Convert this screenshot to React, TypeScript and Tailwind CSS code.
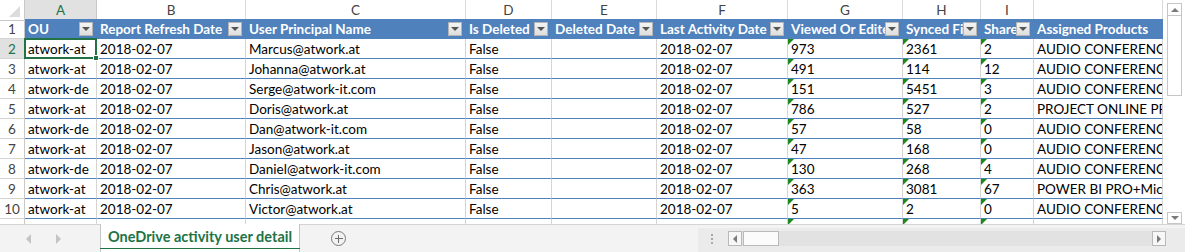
import React from "react";

const rows: string[][] = [
  ["atwork-at", "2018-02-07", "Marcus@atwork.at", "False", "", "2018-02-07", "973", "2361", "2", "AUDIO CONFERENCING+OFFICE 365 E5"],
  ["atwork-at", "2018-02-07", "Johanna@atwork.at", "False", "", "2018-02-07", "491", "114", "12", "AUDIO CONFERENCING+OFFICE 365 E5"],
  ["atwork-de", "2018-02-07", "Serge@atwork-it.com", "False", "", "2018-02-07", "151", "5451", "3", "AUDIO CONFERENCING+OFFICE 365 E5"],
  ["atwork-at", "2018-02-07", "Doris@atwork.at", "False", "", "2018-02-07", "786", "527", "2", "PROJECT ONLINE PREMIUM+OFFICE 365 E5"],
  ["atwork-de", "2018-02-07", "Dan@atwork-it.com", "False", "", "2018-02-07", "57", "58", "0", "AUDIO CONFERENCING+OFFICE 365 E5"],
  ["atwork-at", "2018-02-07", "Jason@atwork.at", "False", "", "2018-02-07", "47", "168", "0", "AUDIO CONFERENCING+OFFICE 365 E5"],
  ["atwork-de", "2018-02-07", "Daniel@atwork-it.com", "False", "", "2018-02-07", "130", "268", "4", "AUDIO CONFERENCING+OFFICE 365 E5"],
  ["atwork-at", "2018-02-07", "Chris@atwork.at", "False", "", "2018-02-07", "363", "3081", "67", "POWER BI PRO+Microsoft Flow Free"],
  ["atwork-at", "2018-02-07", "Victor@atwork.at", "False", "", "2018-02-07", "5", "2", "0", "AUDIO CONFERENCING+OFFICE 365 E5"],
];

const headers = [
  "OU",
  "Report Refresh Date",
  "User Principal Name",
  "Is Deleted",
  "Deleted Date",
  "Last Activity Date",
  "Viewed Or Edited File Count",
  "Synced File Count",
  "Shared Internally File Count",
  "Assigned Products",
];

const letters = ["A", "B", "C", "D", "E", "F", "G", "H", "I", ""];

const GRID =
  "grid grid-cols-[25px_72px_149px_220px_86px_105px_131px_115px_78px_53px_129px]";

function Tri() {
  return (
    <span className="absolute left-0 top-0 w-0 h-0 border-t-[6px] border-t-[#1a8a1a] border-r-[6px] border-r-transparent" />
  );
}

function FilterBtn() {
  return (
    <span className="shrink-0 w-[14px] h-[14px] mr-[4px] mb-[2px] border border-[#b4b4b4] bg-gradient-to-b from-[#f4f4f4] to-[#dedede] flex items-center justify-center">
      <span className="w-0 h-0 border-l-[4px] border-r-[4px] border-t-[4px] border-l-transparent border-r-transparent border-t-[#555555]" />
    </span>
  );
}

function ColumnLetters() {
  return (
    <div className={`${GRID} h-[19px] shrink-0 bg-white`}>
      <div className="relative border-r border-b border-[#c8c8c8] bg-white">
        <span className="absolute right-[4px] bottom-[3px] w-0 h-0 border-b-[11px] border-b-[#dcdcdc] border-l-[11px] border-l-transparent" />
      </div>
      {letters.map((l, i) => (
        <div
          key={i}
          className={
            i === 0
              ? "border-r border-r-[#c8c8c8] border-b-2 border-b-[#217346] bg-[#e1e1e1] text-[#217346] text-center text-[13.5px] pt-[1px] leading-[18px]"
              : "border-r border-r-[#dadada] border-b border-b-[#c8c8c8] text-[#444444] text-center text-[13.5px] pt-[1px] leading-[18px]"
          }
        >
          {l}
        </div>
      ))}
    </div>
  );
}

function HeaderRow() {
  return (
    <div className={`${GRID} h-[20px] shrink-0`}>
      <div className="border-r border-r-[#c8c8c8] border-b border-b-[#d4d4d4] bg-white text-[#444444] text-center text-[13.5px] pt-[2px] leading-[17px]">
        1
      </div>
      {headers.map((h) => (
        <div
          key={h}
          className="bg-[#4f81bd] border-b border-b-[#4f81bd] flex items-end min-w-0 overflow-hidden"
        >
          <span className="flex-1 min-w-0 overflow-hidden whitespace-nowrap pl-[3px] pt-[2px] leading-[17px] h-full text-white font-bold text-[13.5px]">
            {h}
          </span>
          {h !== "Assigned Products" && <FilterBtn />}
        </div>
      ))}
    </div>
  );
}

function DataRow({ n, r, selected }: { n: number; r: string[]; selected?: boolean }) {
  return (
    <div className={`${GRID} h-[20px] shrink-0`}>
      <div
        className={
          selected
            ? "border-r border-r-[#c8c8c8] border-b border-b-[#d4d4d4] bg-[#e1e1e1] text-[#217346] text-center text-[13.5px] pt-[2px] leading-[17px]"
            : "border-r border-r-[#c8c8c8] border-b border-b-[#d4d4d4] bg-white text-[#444444] text-center text-[13.5px] pt-[2px] leading-[17px]"
        }
      >
        {n}
      </div>
      {r.map((v, i) => (
        <div
          key={i}
          className={
            selected && i === 0
              ? "relative z-10 min-w-0 border-r border-r-[#d4d4d4] border-b border-b-[#4f81bd] bg-white"
              : "relative min-w-0 border-r border-r-[#d4d4d4] border-b border-b-[#4f81bd] bg-white"
          }
        >
          {i >= 6 && i <= 8 && <Tri />}
          <div className="overflow-hidden whitespace-nowrap pl-[3px] pt-[2px] leading-[17px] text-[13.5px] text-black">
            {v}
          </div>
          {selected && i === 0 && (
            <div className="absolute -left-[1px] -top-[1px] -right-[1px] -bottom-[1px] border-2 border-[#217346]">
              <span className="absolute -right-[4px] -bottom-[4px] w-[6px] h-[6px] bg-[#217346] border border-white" />
            </div>
          )}
        </div>
      ))}
    </div>
  );
}

function PartialRow() {
  return (
    <div className={`${GRID} h-[20px] shrink-0`}>
      <div className="border-r border-r-[#c8c8c8] bg-white" />
      {letters.map((l, i) => (
        <div key={i} className="relative border-r border-r-[#d4d4d4] bg-white">
          {i >= 6 && i <= 8 && <Tri />}
        </div>
      ))}
    </div>
  );
}

function VScroll() {
  return (
    <div className="w-[22px] h-[224px] bg-white flex flex-col pl-[4px] pt-[3px]">
      <div className="w-[15px] h-[13px] border border-[#c6c6c6] bg-white flex items-center justify-center">
        <span className="w-0 h-0 border-l-[4px] border-r-[4px] border-b-[4px] border-l-transparent border-r-transparent border-b-[#7a7a7a]" />
      </div>
      <div className="w-[15px] h-[80px] border border-t-0 border-[#c6c6c6] bg-white" />
      <div className="flex-1" />
      <div className="w-[15px] h-[12px] border border-[#c6c6c6] bg-white flex items-center justify-center mb-0">
        <span className="w-0 h-0 border-l-[4px] border-r-[4px] border-t-[4px] border-l-transparent border-r-transparent border-t-[#7a7a7a]" />
      </div>
    </div>
  );
}

function BottomBar() {
  return (
    <div className="h-[28px] flex bg-[#f3f3f3] border-t border-t-[#d4d4d4]">
      <div className="w-[100px] flex items-center">
        <span className="ml-[26px] w-0 h-0 border-t-[5px] border-b-[5px] border-r-[5px] border-t-transparent border-b-transparent border-r-[#c4c4c4]" />
        <span className="ml-[25px] w-0 h-0 border-t-[5px] border-b-[5px] border-l-[5px] border-t-transparent border-b-transparent border-l-[#c4c4c4]" />
      </div>
      <div className="w-[200px] -mt-[1px] bg-white border-l border-r border-[#c6c6c6] flex flex-col">
        <div className="flex-1 flex items-center justify-center text-[#217346] font-bold text-[14.5px] pt-[2px]">
          OneDrive activity user detail
        </div>
        <div className="h-[3px] mx-[-1px] bg-[#217346] mb-[3px]" />
      </div>
      <div className="w-[398px] flex items-center">
        <span className="ml-[31px] w-[15px] h-[15px] rounded-full border-[1.5px] border-[#7a7a7a] flex items-center justify-center relative">
          <span className="absolute w-[8px] h-[1.5px] bg-[#6a6a6a]" />
          <span className="absolute w-[1.5px] h-[8px] bg-[#6a6a6a]" />
        </span>
      </div>
      <div className="flex-1 mt-[3px] bg-[#ebebeb] flex items-center">
        <div className="ml-[13px] flex flex-col gap-[2px] mb-[3px]">
          <span className="w-[2px] h-[2px] bg-[#a8a8a8]" />
          <span className="w-[2px] h-[2px] bg-[#a8a8a8]" />
          <span className="w-[2px] h-[2px] bg-[#a8a8a8]" />
        </div>
        <div className="ml-[15px] w-[438px] h-[15px] mb-[3px] bg-[#e2e2e2] flex items-center">
          <div className="w-[14px] h-[15px] border border-[#b9b9b9] bg-[#f7f7f7] flex items-center justify-center">
            <span className="w-0 h-0 border-t-[4px] border-b-[4px] border-r-[4px] border-t-transparent border-b-transparent border-r-[#7a7a7a]" />
          </div>
          <div className="ml-[1px] w-[36px] h-[15px] border border-[#b9b9b9] bg-[#fbfbfb]" />
          <div className="flex-1" />
          <div className="w-[14px] h-[15px] border border-[#b9b9b9] bg-[#f7f7f7] flex items-center justify-center">
            <span className="w-0 h-0 border-t-[4px] border-b-[4px] border-l-[4px] border-t-transparent border-b-transparent border-l-[#7a7a7a]" />
          </div>
        </div>
      </div>
    </div>
  );
}

export default function App() {
  return (
    <div className="w-[1185px] h-[252px] overflow-hidden bg-white flex flex-col font-['Lato',sans-serif]">
      <div className="flex h-[224px] shrink-0">
        <div className="w-[1163px] h-[224px] overflow-hidden flex flex-col">
          <ColumnLetters />
          <HeaderRow />
          {rows.map((r, i) => (
            <DataRow key={i} n={i + 2} r={r} selected={i === 0} />
          ))}
          <PartialRow />
        </div>
        <VScroll />
      </div>
      <BottomBar />
    </div>
  );
}
